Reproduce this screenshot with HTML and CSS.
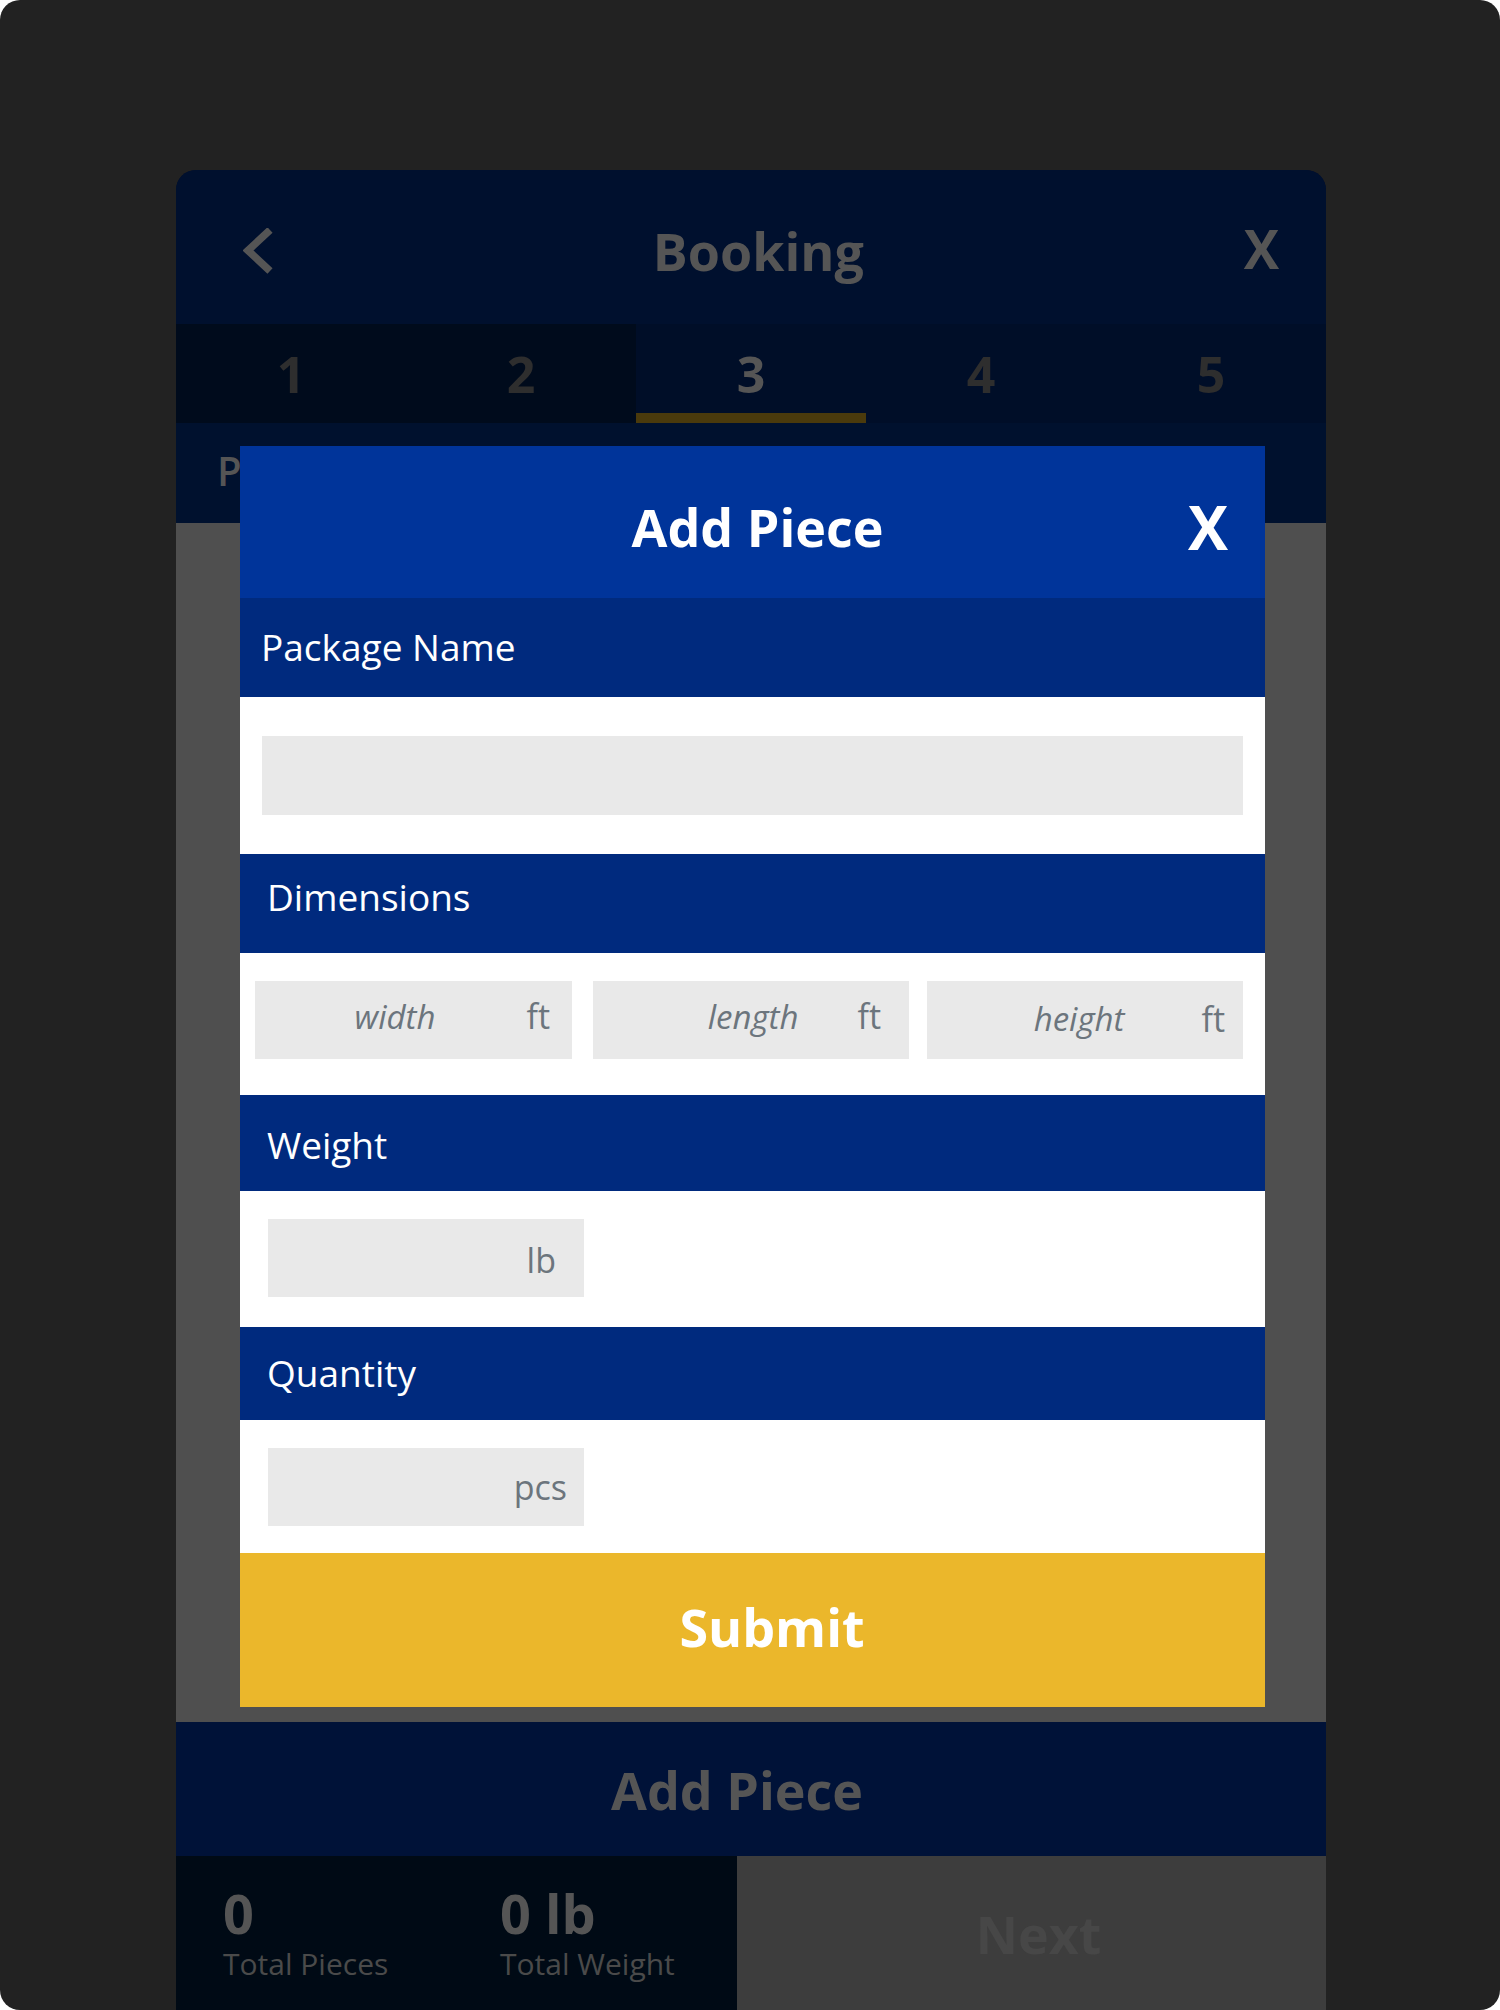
FILE: index.html
```html
<!DOCTYPE html>
<html lang="en">
<head>
<meta charset="utf-8">
<title>Booking - Add Piece</title>
<link rel="stylesheet" href="styles.css">
</head>
<body>
<div class="screen">
  <div class="phone">
    <header class="topbar">
      <svg class="back" width="30" height="46" viewBox="0 0 30 46" aria-hidden="true">
        <polyline points="27,2 5,22.5 27,43" fill="none" stroke="#555555" stroke-width="7.5"/>
      </svg>
      <div class="topbar-title">Booking</div>
      <div class="topbar-close">X</div>
    </header>
    <nav class="tabs">
      <div class="tab tab-done">1</div>
      <div class="tab tab-done">2</div>
      <div class="tab tab-active">3</div>
      <div class="tab">4</div>
      <div class="tab">5</div>
    </nav>
    <div class="subheader">P</div>
    <main class="content"></main>
    <div class="addbar">Add Piece</div>
    <footer class="bottom">
      <div class="stats">
        <div class="stat">
          <div class="stat-value">0</div>
          <div class="stat-label">Total Pieces</div>
        </div>
        <div class="stat">
          <div class="stat-value">0 lb</div>
          <div class="stat-label">Total Weight</div>
        </div>
      </div>
      <div class="next">Next</div>
    </footer>

    <div class="modal">
      <div class="modal-header">
        <div></div>
        <div class="modal-title">Add Piece</div>
        <div class="modal-close">X</div>
      </div>

      <div class="sec-head sec-pkg">Package Name</div>
      <div class="sec-body body-pkg">
        <div class="field field-full"></div>
      </div>

      <div class="sec-head sec-dim">Dimensions</div>
      <div class="sec-body body-dim">
        <div class="field field-w"><span class="ph">width</span><span class="unit">ft</span></div>
        <div class="field field-l"><span class="ph">length</span><span class="unit">ft</span></div>
        <div class="field field-h"><span class="ph">height</span><span class="unit">ft</span></div>
      </div>

      <div class="sec-head sec-wt">Weight</div>
      <div class="sec-body body-wt">
        <div class="field field-small field-lb"><span class="unit">lb</span></div>
      </div>

      <div class="sec-head sec-qty">Quantity</div>
      <div class="sec-body body-qty">
        <div class="field field-small field-pcs"><span class="unit">pcs</span></div>
      </div>

      <div class="submit">Submit</div>
    </div>
  </div>
</div>
</body>
</html>
```
FILE: styles.css
```css
* { box-sizing: border-box; }

html, body {
  margin: 0;
  padding: 0;
  background: #ffffff;
}

body {
  font-family: "Open Sans", "Liberation Sans", sans-serif;
}

.screen {
  width: 1500px;
  height: 2010px;
  background: #222222;
  border-radius: 20px;
  padding-top: 170px;
  overflow: hidden;
}

.phone {
  position: relative;
  width: 1150px;
  height: 1840px;
  margin-left: 176px;
  border-radius: 20px 20px 0 0;
  overflow: hidden;
  background: #00102e;
  display: flex;
  flex-direction: column;
}

/* top bar */
.topbar {
  height: 154px;
  flex: none;
  display: flex;
  align-items: center;
  padding: 8px 47px 0 67px;
  background: #00102e;
}
.back { display: block; flex: none; }
.topbar-title {
  flex: 1;
  text-align: center;
  font-size: 52px;
  font-weight: 700;
  line-height: 1;
  color: #555555;
}
.topbar-close {
  font-size: 53px;
  font-weight: 700;
  line-height: 1;
  color: #555555;
  margin-top: -6px;
}

/* tabs */
.tabs {
  height: 99px;
  flex: none;
  display: grid;
  grid-template-columns: repeat(5, 1fr);
  background: #000e28;
}
.tab {
  display: flex;
  align-items: center;
  justify-content: center;
  padding-top: 10px;
  border-bottom: 10px solid transparent;
  font-size: 50px;
  font-weight: 700;
  line-height: 1;
  color: #2e2e2e;
}
.tab-done { background: #000b1c; }
.tab-active {
  color: #555555;
  border-bottom-color: #4a3a0c;
}

.subheader {
  height: 100px;
  flex: none;
  display: flex;
  align-items: center;
  padding-left: 41px;
  padding-bottom: 5px;
  background: #00112e;
  font-size: 40px;
  font-weight: 600;
  color: #555555;
}

.content {
  flex: 1;
  background: #4f4f4f;
}

.addbar {
  height: 134px;
  flex: none;
  display: flex;
  align-items: center;
  justify-content: center;
  padding-right: 28px;
  background: #001238;
  font-size: 52px;
  font-weight: 700;
  color: #555555;
}

.bottom {
  height: 154px;
  flex: none;
  display: flex;
}
.stats {
  width: 561px;
  flex: none;
  background: #000a15;
  display: flex;
  padding: 30px 0 0 47px;
}
.stat { width: 277px; flex: none; }
.stat-value {
  font-size: 54px;
  font-weight: 700;
  line-height: 54px;
  color: #555555;
}
.stat-label {
  margin-top: 9px;
  font-size: 30px;
  line-height: 30px;
  color: #4a4a4a;
}
.next {
  flex: 1;
  background: #3d3d3d;
  display: flex;
  align-items: center;
  justify-content: center;
  padding-left: 14px;
  font-size: 52px;
  font-weight: 700;
  color: #474747;
}

/* modal */
.modal {
  position: absolute;
  left: 64px;
  top: 276px;
  width: 1025px;
  background: #ffffff;
}
.modal-header {
  height: 152px;
  background: #00349a;
  display: grid;
  grid-template-columns: 1fr auto 1fr;
  align-items: center;
  padding-top: 10px;
}
.modal-title {
  font-size: 52px;
  font-weight: 700;
  line-height: 1;
  color: #ffffff;
  padding-left: 10px;
}
.modal-close {
  justify-self: end;
  padding-right: 37px;
  font-size: 60px;
  font-weight: 700;
  line-height: 1;
  color: #ffffff;
}

.sec-head {
  display: flex;
  align-items: center;
  background: #002a7e;
  font-size: 37px;
  font-weight: 400;
  color: #ffffff;
  padding-left: 27px;
}
.sec-pkg { height: 99px; padding-left: 21px; padding-bottom: 2px; }
.sec-dim { height: 99px; padding-bottom: 15px; }
.sec-wt { height: 96px; padding-top: 2px; }
.sec-qty { height: 93px; padding-bottom: 2px; }

.sec-body { background: #ffffff; }
.body-pkg { height: 157px; padding: 39px 22px 0 22px; }
.body-dim {
  height: 142px;
  padding: 28px 0 0 15px;
  display: flex;
}
.body-wt { height: 136px; padding: 28px 0 0 28px; }
.body-qty { height: 133px; padding: 28px 0 0 28px; }

.field {
  height: 78px;
  background: #e9e9e9;
  display: flex;
  align-items: center;
  justify-content: flex-end;
  color: #6c757d;
  flex: none;
}
.field-full { height: 79px; }
.field-small { width: 316px; }

.ph {
  font-size: 33px;
  font-style: italic;
  line-height: 1;
}
.unit {
  font-size: 34px;
  line-height: 1;
}

.field-w { width: 317px; gap: 91px; padding-right: 22px; padding-bottom: 8px; }
.field-l { width: 316px; margin-left: 21px; gap: 59px; padding-right: 28px; padding-bottom: 8px; }
.field-h { width: 316px; margin-left: 18px; gap: 77px; padding-right: 18px; padding-bottom: 3px; }
.field-lb { padding-right: 28px; padding-top: 4px; }
.field-pcs { padding-right: 17px; }

.submit {
  height: 154px;
  background: #ebb72b;
  display: flex;
  align-items: center;
  justify-content: center;
  padding-left: 39px;
  padding-bottom: 7px;
  font-size: 52px;
  font-weight: 700;
  color: #ffffff;
}
```
